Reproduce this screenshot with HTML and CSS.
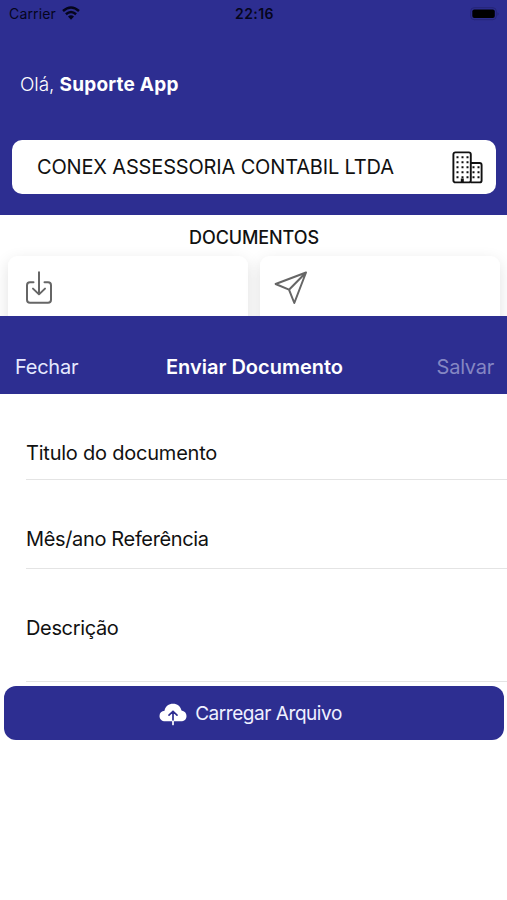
FILE: index.html
```
<!DOCTYPE html>
<html lang="pt-BR">
<head>
<meta charset="utf-8">
<meta name="viewport" content="width=device-width">
<title>Enviar Documento</title>
<link rel="stylesheet" href="styles.css">
</head>
<body>
<header class="hero">
  <div class="status">
    <div class="carrier"><span>Carrier</span>
      <svg class="wifi" width="18" height="14" viewBox="0 0 18 14"><g fill="none" stroke="#05051c" stroke-width="2.5"><path d="M1 5Q9-2 17 5"/><path d="M3.9 8.2Q9 3.8 14.1 8.2"/></g><path d="M6 10.5Q9 8 12 10.5L9 13.7Z" fill="#05051c"/></svg>
    </div>
    <time class="clock">22:16</time>
    <svg class="battery" width="30" height="14" viewBox="0 0 30 14"><rect x=".7" y=".7" width="25.6" height="12" rx="3.5" fill="none" stroke="#252577"/><rect x="2.3" y="2.4" width="22.5" height="8.7" rx="2" fill="#000"/><path d="M27.7 5v4q1.6-2 0-4" fill="#20205f"/></svg>
  </div>
  <p class="hello"><span>Olá, </span><b>Suporte App</b></p>
  <div class="company">
    <span>CONEX ASSESSORIA CONTABIL LTDA</span>
    <svg width="31" height="33" viewBox="0 0 31 33"><g fill="none" stroke="#111" stroke-width="1.9"><rect x="1.4" y="1.4" width="17.4" height="30" rx="2"/><path d="M18.8 12h8.8q2 0 2 2v15.4q0 2-2 2h-8.8"/></g><path d="M4.5 6.3h12M4.5 11.3h12M4.5 16.3h12M4.5 21.3h12M4.5 26.3h12" stroke="#111" stroke-width="2" stroke-dasharray="2 3"/><path d="M20.5 16.3h8M20.5 21.3h8M20.5 26.3h8" stroke="#111" stroke-width="2" stroke-dasharray="2 3"/><path d="M8.8 27.5h3v4h-3z" fill="#111"/></svg>
  </div>
</header>
<section class="docs">
  <h2>DOCUMENTOS</h2>
  <div class="cards">
    <div class="card"><svg width="28" height="34" viewBox="0 0 28 34"><g fill="none" stroke="#666" stroke-width="2" stroke-linecap="round" stroke-linejoin="round"><path d="M8.5 11.2H5Q2 11.2 2 14.2V28.7Q2 31.7 5 31.7H23Q26 31.7 26 28.7V14.2Q26 11.2 23 11.2H19.5"/><path d="M14 1.2V23.3M8 17.6L14 23.4L20 17.6"/></g></svg></div>
    <div class="card"><svg width="34" height="34" viewBox="0 0 34 34"><path d="M32 1.5L1.6 13L15 18.7L20.3 32ZM32 1.5L15 18.7" fill="none" stroke="#666" stroke-width="2" stroke-linejoin="round"/></svg></div>
  </div>
</section>
<main class="sheet">
  <nav class="bar"><span class="close">Fechar</span><h1>Enviar Documento</h1><span class="save">Salvar</span></nav>
  <div class="field title"><span>Titulo do documento</span></div>
  <div class="field month"><span>Mês/ano Referência</span></div>
  <div class="field desc"><span>Descrição</span></div>
  <div class="upload">
    <svg width="28" height="23" viewBox="0 0 28 23"><path d="M6.3 18.2C2.7 18.2.5 16 .5 12.9S2.7 8 5.5 7.7C6.3 3.4 9.8.8 14 .8c4.4 0 7.6 2.6 8.5 6.8 3 .5 5 2.6 5 5.3 0 3.3-2.3 5.3-5.7 5.3Z" fill="#fff"/><path d="M14 18V8.7M10 12.2L14 8.4L18 12.2" fill="none" stroke="#2d2e91" stroke-width="1.7" stroke-linecap="round"/><path d="M14 18.2V21.5" stroke="#fff" stroke-width="1.7" stroke-linecap="round"/></svg>
    <span>Carregar Arquivo</span>
  </div>
</main>
</body>
</html>
```
FILE: styles.css
```
* { box-sizing: border-box; margin: 0; padding: 0; }
body { width: 507px; height: 900px; overflow: hidden; background: #fff; color: #111; font: 20px/26px Inter, "Liberation Sans", sans-serif; }
svg { display: block; flex: none; }
span, h1, h2, time, p { white-space: nowrap; }
.hero { height: 215px; background: #2d2e91; }
.status { height: 28px; padding: 0 7px 0 9px; display: grid; grid-template-columns: 1fr auto 1fr; align-items: center; color: #05051c; font-size: 14px; line-height: 28px; }
.carrier { display: flex; align-items: center; gap: 6px; letter-spacing: .15px; }
.wifi { margin-top: -2px; }
.clock { font-weight: 600; letter-spacing: .4px; }
.battery { justify-self: end; margin-top: -1px; }
.hello { padding: 44px 20px 0; color: #fff; font-size: 19px; letter-spacing: -.1px; }
.hello span { font-weight: 300; white-space: pre; }
.hello b { font-weight: 700; letter-spacing: .22px; }
.company { height: 54px; margin: 42px 11px 0 12px; padding: 0 13px 0 25px; background: #fff; border-radius: 10px; display: flex; align-items: center; justify-content: space-between; letter-spacing: -.16px; }
.docs { height: 101px; padding: 10px 7px 0 8px; overflow: hidden; }
.docs h2 { text-align: center; font-size: 18px; font-weight: 500; line-height: 26px; letter-spacing: -.1px; }
.cards { margin-top: 5px; display: grid; grid-template-columns: 1fr 1fr; gap: 12px; }
.card { height: 90px; padding: 15px 17px; background: #fff; border-radius: 9px; box-shadow: 0 5px 16px rgba(0, 0, 0, .12); }
.card + .card { padding-left: 14px; }
.sheet { height: 584px; background: #fff; }
.bar { height: 78px; padding: 23px 13px 0 15px; background: #2d2e91; color: #e5e9ff; display: grid; grid-template-columns: 1fr auto 1fr; align-items: center; }
.bar span { letter-spacing: -.25px; }
.bar h1 { color: #fff; font-size: 20px; font-weight: 600; line-height: 26px; }
.save { justify-self: end; color: #8587c3; }
.field { margin-left: 26px; border-bottom: 1px solid #e4e4e4; letter-spacing: -.35px; }
.title { height: 86px; padding-top: 46px; letter-spacing: -.22px; }
.month { height: 89px; padding-top: 46px; }
.desc { height: 113px; padding-top: 46px; }
.upload { height: 54px; margin: 4px 3px 0 4px; padding: 2px 7px 0 0; border-radius: 12px; background: #2d2e91; color: #eff1ff; display: flex; align-items: center; justify-content: center; gap: 8px; font-size: 19px; letter-spacing: -.45px; }
```
